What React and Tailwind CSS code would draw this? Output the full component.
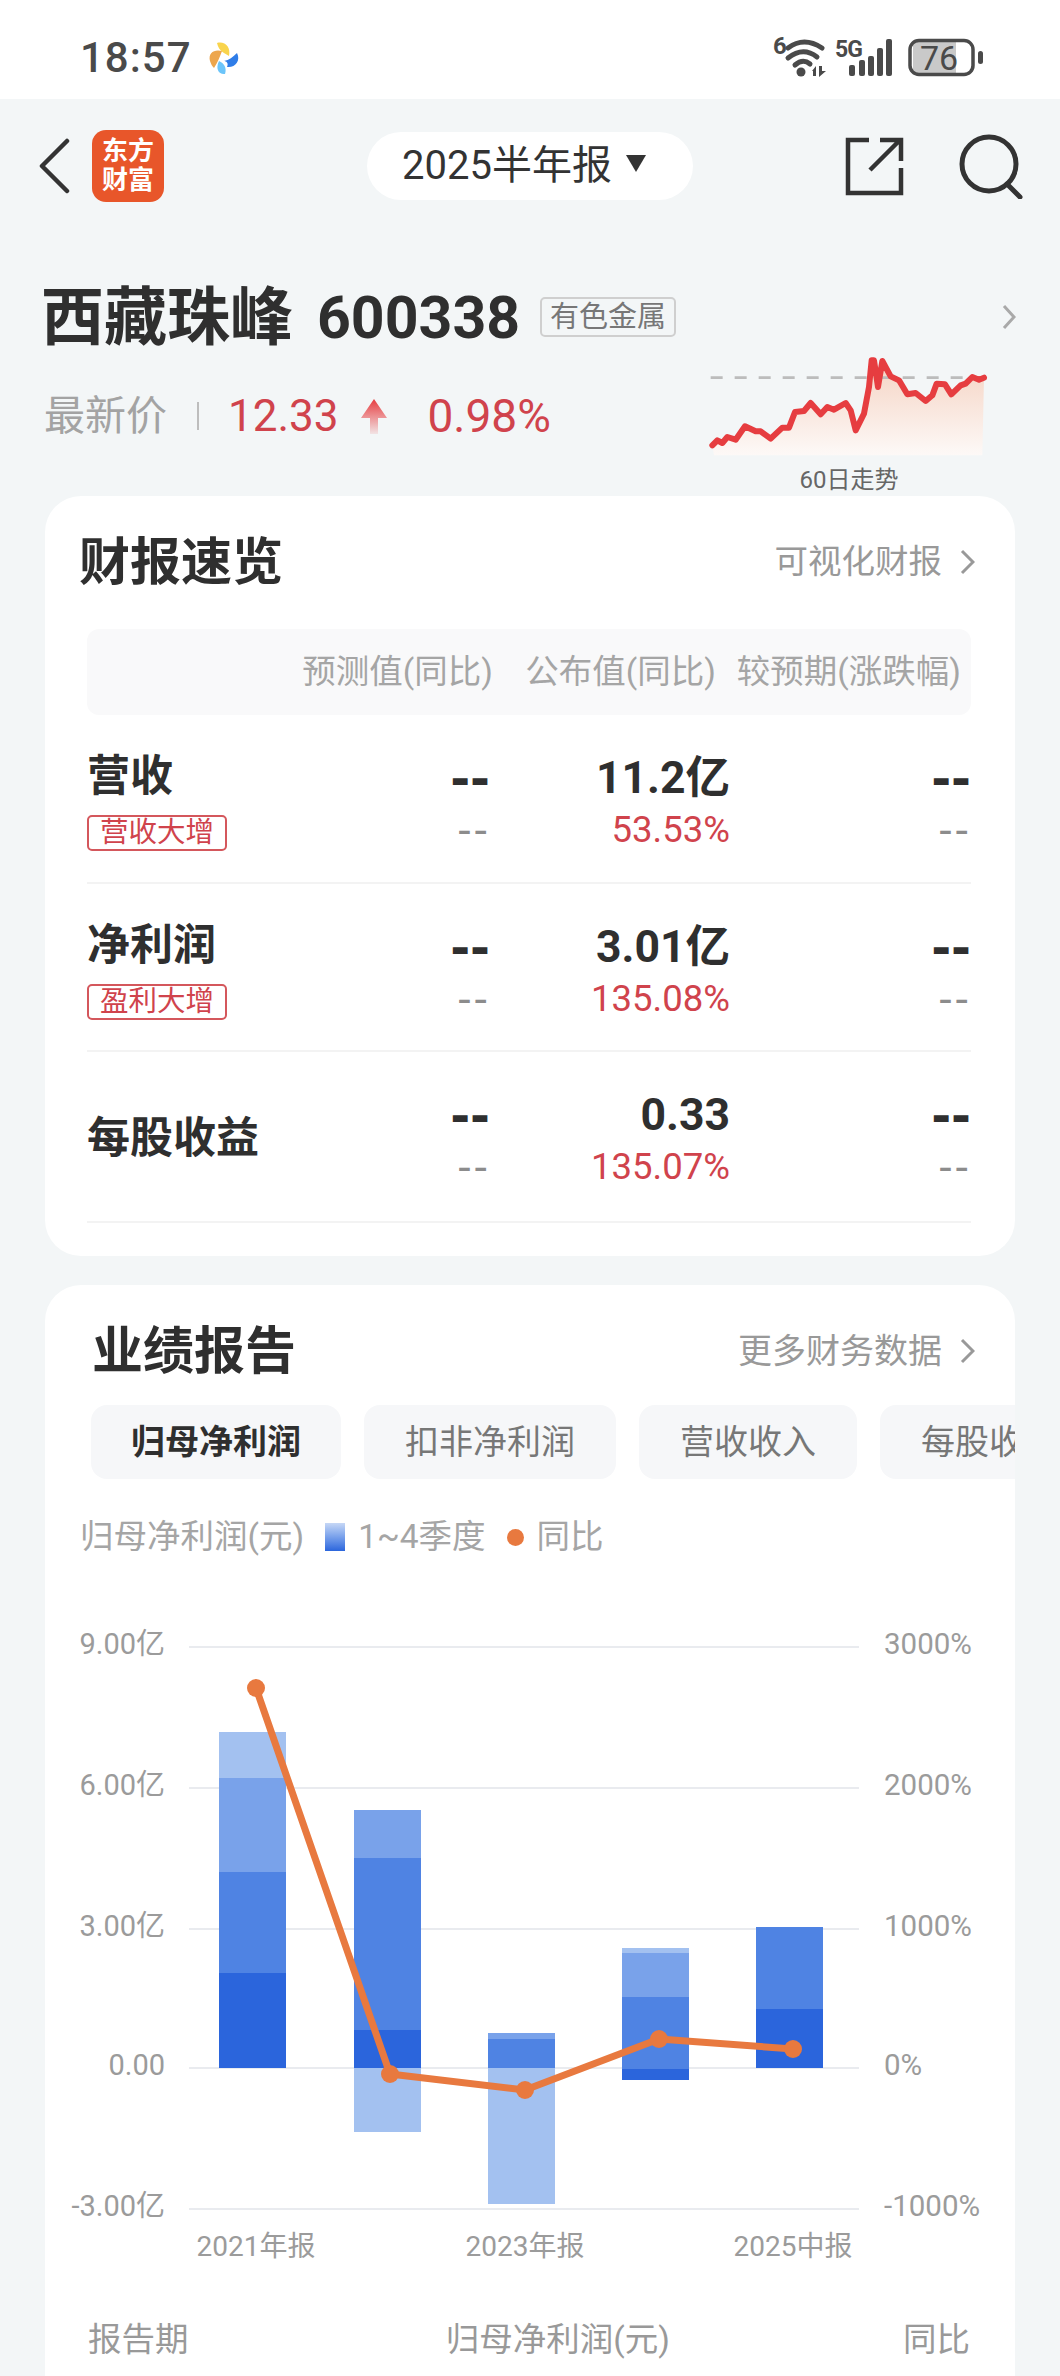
const ROWS = [
  { name: '营收', tag: '营收大增', value: '11.2亿', pct: '53.53%', h: 'h-[169px]' },
  { name: '净利润', tag: '盈利大增', value: '3.01亿', pct: '135.08%', h: 'h-[168px]' },
  { name: '每股收益', value: '0.33', pct: '135.07%', h: 'h-[171px]' },
]

const TABS = [
  { label: '归母净利润', w: 'w-[250px]', active: true },
  { label: '扣非净利润', w: 'w-[252px]' },
  { label: '营收收入', w: 'w-[218px]' },
  { label: '每股收益', w: 'w-[218px]' },
]

const BARS = [
  { x: 219, segs: [[1973, 2068, '#2b65dc'], [1872, 1973, '#4f83e3'], [1778, 1872, '#79a2ea'], [1732, 1778, '#a3c1f0']] },
  { x: 354, segs: [[2030, 2068, '#2b65dc'], [1858, 2030, '#4f83e3'], [1810, 1858, '#79a2ea'], [2068, 2132, '#a3c1f0']] },
  { x: 488, segs: [[2039, 2068, '#4f83e3'], [2033, 2039, '#79a2ea'], [2068, 2204, '#a3c1f0']] },
  { x: 622, segs: [[2069, 2080, '#2b65dc'], [1997, 2069, '#4f83e3'], [1953, 1997, '#79a2ea'], [1948, 1953, '#a3c1f0']] },
  { x: 756, segs: [[2009, 2068, '#2b65dc'], [1927, 2009, '#4f83e3']] },
]

const LINE = [[256, 1688], [390, 2074], [525, 2090], [659, 2039], [793, 2049]]

const GRID = [
  { y: 1647, l: '9.00亿', r: '3000%' },
  { y: 1788, l: '6.00亿', r: '2000%' },
  { y: 1929, l: '3.00亿', r: '1000%' },
  { y: 2068, l: '0.00', r: '0%' },
  { y: 2209, l: '-3.00亿', r: '-1000%' },
]

const SPARK = '160,345 175,330 190,338 205,320 230,328 258,288 290,303 305,303 335,325 370,292 390,292 408,245 435,242 455,218 485,252 505,230 525,238 560,218 575,240 590,300 615,250 630,170 638,90 645,90 657,170 670,92 695,138 720,150 745,192 770,188 800,212 820,195 833,160 858,162 877,192 905,165 920,160 940,140 960,148 975,142'

function StatusIcons() {
  return (
    <svg width="216" height="50" viewBox="770 33 216 50" className="text-[#4a4a4a]">
      <text x="773" y="54" fontSize="24" fontWeight="700" fill="currentColor">6</text>
      <g fill="none" stroke="currentColor" strokeWidth="5" strokeLinecap="round">
        <path d="M788 48 Q804 36 822 48" />
        <path d="M788 58 Q803 46 817 57" />
        <path d="M795 65 Q803 58 810 64" />
      </g>
      <circle cx="801" cy="72" r="4.5" fill="currentColor" />
      <path d="M812 71 L816 66 V76 H813 V71 Z M819 66 H822 V71 L826 71 L819 77 Z" fill="currentColor" />
      <text x="835" y="57" fontSize="23" fontWeight="700" fill="currentColor" letterSpacing="-1">5G</text>
      <g fill="currentColor">
        <rect x="849" y="65" width="6" height="11" rx="2" />
        <rect x="859" y="60" width="6" height="16" rx="2" />
        <rect x="868" y="56" width="6" height="20" rx="2" />
        <rect x="877" y="48" width="6" height="28" rx="2" />
        <rect x="886" y="39" width="6" height="37" rx="2" />
        <rect x="978" y="51" width="5" height="13" rx="2.5" />
      </g>
      <rect x="913" y="42" width="43" height="32" fill="#c9c9c9" />
      <rect x="910" y="40.5" width="63" height="34" rx="9" fill="none" stroke="currentColor" strokeWidth="3.5" />
      <text x="920" y="70" fontSize="34" fill="currentColor">76</text>
    </svg>
  )
}

function Spark() {
  return (
    <svg width="280" height="100" viewBox="150 80 840 300">
      <defs>
        <linearGradient id="sparkFill" x1="0" y1="0" x2="0" y2="1">
          <stop offset="0" stopColor="#f5d3c3" />
          <stop offset="1" stopColor="#fdf9f7" />
        </linearGradient>
      </defs>
      <polygon points={`165,375 ${SPARK} 970,375`} fill="url(#sparkFill)" />
      <line x1="155" y1="142" x2="975" y2="142" stroke="#bcbcbc" strokeWidth="8" strokeDasharray="36 36" />
      <polyline points={SPARK} fill="none" stroke="#e63d40" strokeWidth="18" strokeLinejoin="round" strokeLinecap="round" />
    </svg>
  )
}

function Chart() {
  return (
    <svg width="970" height="660" viewBox="45 1620 970 660" className="block">
      {GRID.map(g => (
        <g key={g.y}>
          <line x1="189" x2="859" y1={g.y} y2={g.y} stroke="#e9ebef" strokeWidth="2" />
          <text x="165" y={g.y + 7} textAnchor="end" fontSize="29" fill="#9b9b9b">{g.l}</text>
          <text x="884" y={g.y + 7} fontSize="29.5" fill="#9b9b9b">{g.r}</text>
        </g>
      ))}
      {BARS.map(b => b.segs.map(([top, bottom, color]) => (
        <rect key={`${b.x}-${top}`} x={b.x} y={top} width="67" height={bottom - top} fill={color} />
      )))}
      <polyline points={LINE.map(p => p.join(',')).join(' ')} fill="none" stroke="#e8793f" strokeWidth="7" strokeLinejoin="round" />
      {LINE.map(p => <circle key={p[0]} cx={p[0]} cy={p[1]} r="9" fill="#e8793f" />)}
      <text x="256" y="2256" textAnchor="middle" fontSize="28" fill="#9b9b9b">2021年报</text>
      <text x="525" y="2256" textAnchor="middle" fontSize="28" fill="#9b9b9b">2023年报</text>
      <text x="793" y="2256" textAnchor="middle" fontSize="28" fill="#9b9b9b">2025中报</text>
    </svg>
  )
}

function Chevron() {
  return (
    <svg width="15" height="26" viewBox="0 0 15 26" className="ml-[18px]">
      <path d="M2 2 L13 13 L2 24" fill="none" stroke="#999" strokeWidth="3" />
    </svg>
  )
}

function Dash({ big }) {
  return big
    ? <div className="h-[50px] font-['DejaVu_Sans',sans-serif] text-[48px] leading-[50px] font-bold text-[#2f2f2f] text-right">--</div>
    : <div className="h-[40px] mt-[7px] font-['DejaVu_Sans',sans-serif] text-[40px] leading-[40px] tracking-[2px] text-[#8c8c8c] text-right">--</div>
}

export default function App() {
  return (
    <div className="w-[1060px] h-[2376px] overflow-hidden bg-[#f3f6f7] font-[Roboto,'Noto_Sans_CJK_SC',sans-serif] text-[#2f2f2f]">
      {/* status bar */}
      <div className="h-[99px] bg-white flex items-center pl-[80px] pr-[74px]">
        <span className="text-[42px] font-medium tracking-[1px] text-[#4a4a4a] leading-none mt-[16px]">18:57</span>
        <svg width="34" height="34" viewBox="0 0 34 34" className="ml-[15px] mt-[16px]">
          <path d="M10 2 C18 0 24 6 22 15 C18 12 12 11 10 2Z" fill="#f9d44c" />
          <path d="M3 20 C1 12 7 8 15 10 C13 15 11 21 7 27 C5 25 4 23 3 20Z" fill="#eda64d" />
          <path d="M30 12 C34 20 28 27 20 26 C22 22 19 20 17 20 C22 19 26 16 30 12Z" fill="#2f7de8" />
          <path d="M12 20 C17 22 20 27 18 33 C12 34 8 28 12 20Z" fill="#6cc5fa" />
        </svg>
        <div className="ml-auto mt-[16px]"><StatusIcons /></div>
      </div>

      {/* nav */}
      <div className="h-[134px] flex items-center pl-[38px] pr-[36px]">
        <svg width="32" height="56" viewBox="0 0 32 56">
          <path d="M29 3 L4 28 L29 53" fill="none" stroke="#333" strokeWidth="4.5" strokeLinecap="round" strokeLinejoin="round" />
        </svg>
        <div className="ml-[22px] w-[72px] h-[72px] rounded-[14px] bg-[#e8562a] text-white text-[26px] leading-[29px] font-bold text-center flex flex-col justify-center">
          <span>东方</span>
          <span>财富</span>
        </div>
        <div className="ml-[203px] w-[326px] h-[68px] rounded-full bg-white flex items-center pl-[35px]">
          <span className="text-[40px] leading-none text-[#333]">2025半年报</span>
          <svg width="20" height="17" viewBox="0 0 20 17" className="ml-[14px] mt-[-6px]">
            <path d="M0 0 H20 L10 17 Z" fill="#333" />
          </svg>
        </div>
        <svg width="60" height="60" viewBox="0 0 60 60" className="ml-[151px]">
          <g fill="none" stroke="#333" strokeWidth="4.5">
            <path d="M25 4 H4 V57 H57 V32" />
            <path d="M26 34 L56 4 M36 4 H57 V25" />
          </g>
        </svg>
        <svg width="66" height="66" viewBox="0 0 66 66" className="ml-[54px]">
          <circle cx="31" cy="31" r="27" fill="none" stroke="#333" strokeWidth="5" />
          <path d="M49 51 L62 64" fill="none" stroke="#333" strokeWidth="5" strokeLinecap="round" />
        </svg>
      </div>

      {/* stock header */}
      <div className="h-[263px] pl-[41px] pr-[45px] pt-[51px]">
        <div className="flex items-center h-[66px]">
          <span className="text-[63px] leading-none font-bold">西藏珠峰</span>
          <span className="ml-[24px] text-[59px] leading-none font-bold">600338</span>
          <span className="ml-[20px] w-[136px] h-[40px] border-2 border-[#cfcfcf] rounded-[5px] text-[29px] leading-none text-[#777] flex items-center justify-center whitespace-nowrap">有色金属</span>
          <svg width="14" height="26" viewBox="0 0 14 26" className="ml-auto mr-[-1px]">
            <path d="M2 2 L12 13 L2 24" fill="none" stroke="#a9a9a9" strokeWidth="3" />
          </svg>
        </div>
        <div className="flex mt-[7px] pl-[3px]">
          <div className="flex items-center h-[66px] mt-[26px]">
            <span className="text-[41px] leading-none text-[#a3a3a3]">最新价</span>
            <span className="ml-[30px] w-[2px] h-[28px] bg-[#bdbdbd]" />
            <span className="ml-[29px] text-[44px] leading-none text-[#d0434c]">12.33</span>
            <svg width="28" height="36" viewBox="0 0 28 36" className="ml-[21px]">
              <defs>
                <linearGradient id="upArrow" x1="0" y1="0" x2="0" y2="1">
                  <stop offset="0" stopColor="#e63d40" />
                  <stop offset="1" stopColor="#e63d40" stopOpacity="0.1" />
                </linearGradient>
              </defs>
              <path d="M14 1 L27 20 H18 V36 H10 V20 H1 Z" fill="url(#upArrow)" />
            </svg>
            <span className="ml-[40px] text-[46px] leading-none text-[#d0434c]">0.98%</span>
          </div>
          <div className="ml-auto mr-[26px] flex flex-col items-center">
            <Spark />
            <span className="mt-[11px] text-[24px] leading-none text-[#666]">60日走势</span>
          </div>
        </div>
      </div>

      {/* quick view card */}
      <div className="mx-[45px] w-[970px] h-[760px] bg-white rounded-[36px] pt-[36px]">
        <div className="flex items-center justify-between h-[60px] pl-[34px] pr-[40px]">
          <span className="text-[51px] leading-none font-bold">财报速览</span>
          <span className="flex items-center text-[33.5px] leading-none text-[#999]">
            可视化财报
            <Chevron />
          </span>
        </div>
        <div className="ml-[42px] w-[884px] mt-[37px] h-[86px] bg-[#f9f9fa] rounded-[12px] grid grid-cols-[406px_223px_245px] items-center text-[33.5px] leading-none text-[#a5a5a5]">
          <span className="text-right whitespace-nowrap">预测值(同比)</span>
          <span className="text-right whitespace-nowrap">公布值(同比)</span>
          <span className="text-right whitespace-nowrap">较预期(涨跌幅)</span>
        </div>
        <div className="ml-[42px] w-[884px]">
          {ROWS.map(r => (
            <div key={r.name} className={`grid grid-cols-[253px_150px_240px_241px] border-b-2 border-[#f3f3f3] ${r.h}`}>
              <div className={r.tag ? 'pt-[36px]' : 'pt-[61px]'}>
                <div className="text-[43px] leading-[50px] font-bold">{r.name}</div>
                {r.tag && (
                  <div className="mt-[14px] w-[140px] h-[36px] border-2 border-[#d4575c] rounded-[5px] text-[28.5px] leading-none text-[#d0434c] flex items-center justify-center">{r.tag}</div>
                )}
              </div>
              <div className="pt-[38px]">
                <Dash big />
                <Dash />
              </div>
              <div className="pt-[38px] text-right">
                <div className="h-[50px] text-[44.5px] leading-[50px] font-bold">{r.value}</div>
                <div className="h-[40px] mt-[7px] text-[36.5px] leading-[40px] text-[#d0434c]">{r.pct}</div>
              </div>
              <div className="pt-[38px]">
                <Dash big />
                <Dash />
              </div>
            </div>
          ))}
        </div>
      </div>

      {/* report card */}
      <div className="mx-[45px] mt-[29px] w-[970px] bg-white rounded-t-[36px] pt-[36px] pb-[100px] overflow-hidden">
        <div className="flex items-center justify-between h-[60px] pl-[47px] pr-[40px]">
          <span className="text-[51px] leading-none font-bold">业绩报告</span>
          <span className="flex items-center text-[34px] leading-none text-[#999]">
            更多财务数据
            <Chevron />
          </span>
        </div>
        <div className="flex gap-[23px] mt-[24px] pl-[46px] w-[1100px]">
          {TABS.map(t => (
            <div key={t.label} className={`${t.w} h-[74px] shrink-0 bg-[#f6f7f9] rounded-[16px] flex items-center justify-center text-[34px] leading-none ${t.active ? 'font-bold text-[#2f2f2f]' : 'text-[#777]'}`}>
              {t.label}
            </div>
          ))}
        </div>
        <div className="flex items-center h-[40px] mt-[38px] pl-[35px] text-[33.5px] leading-none text-[#a5a5a5]">
          <span>归母净利润(元)</span>
          <span className="ml-[21px] w-[20px] h-[28px] bg-gradient-to-b from-[#c6d7f5] to-[#2b65dc]" />
          <span className="ml-[13px]">1~4季度</span>
          <span className="ml-[21px] w-[17px] h-[17px] rounded-full bg-[#e8793f]" />
          <span className="ml-[13px]">同比</span>
        </div>
        <div className="mt-[63px]"><Chart /></div>
        <div className="flex justify-between h-[40px] mt-[40px] pl-[43px] pr-[45px] items-center text-[33.5px] leading-none text-[#999]">
          <span>报告期</span>
          <span className="ml-[24px]">归母净利润(元)</span>
          <span>同比</span>
        </div>
      </div>
    </div>
  )
}
